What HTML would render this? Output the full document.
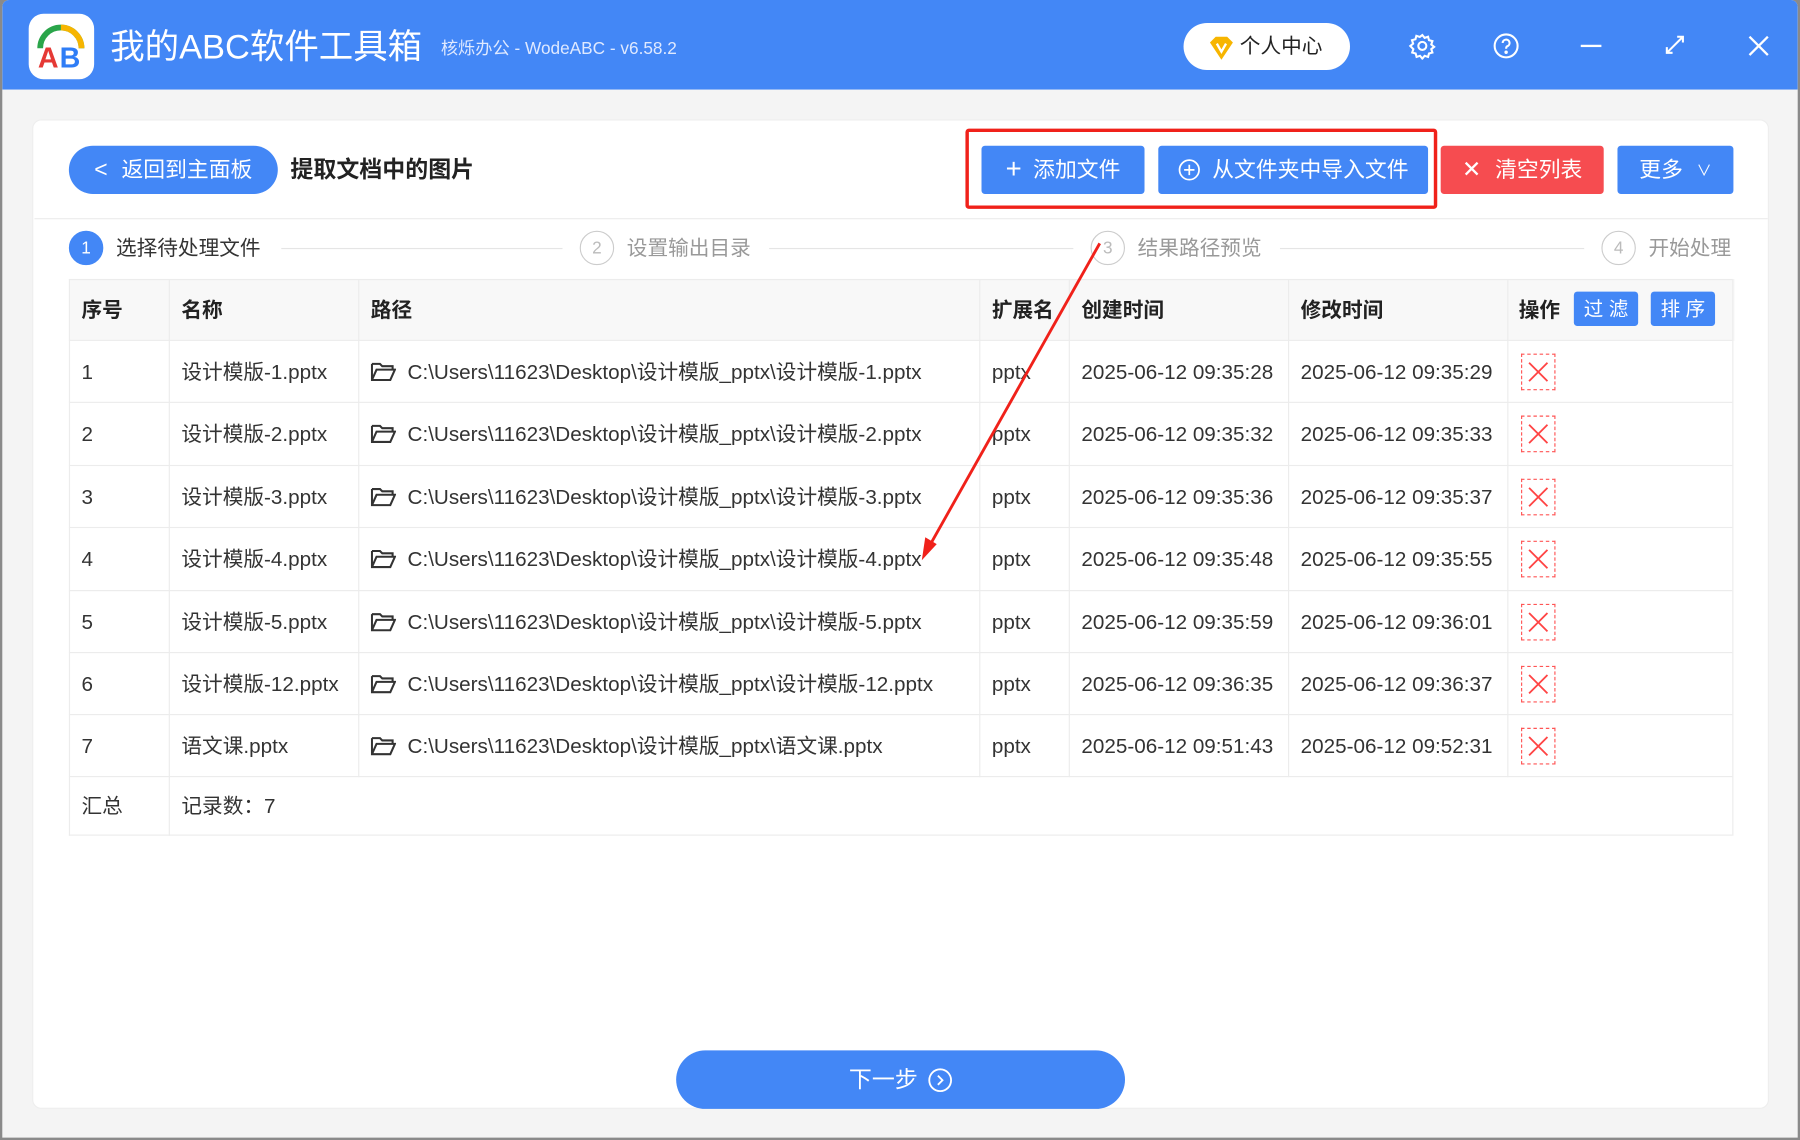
<!DOCTYPE html>
<html><head><meta charset="utf-8">
<style>
*{box-sizing:border-box;margin:0;padding:0}
html,body{width:1800px;height:1140px;overflow:hidden;background:#8a8a8a}
#s{position:absolute;left:0;top:0;width:1568px;height:993px;transform:scale(1.14796);transform-origin:0 0;font-family:"Liberation Sans","Noto Sans CJK SC",sans-serif;color:#333}
.a{position:absolute}
.win{left:2px;top:0;width:1564px;height:991px;background:#f4f4f4;border-radius:6px 6px 0 0;overflow:hidden}
.tb{left:0;top:0;width:1564px;height:78px;background:#4387f6}
.btn{position:absolute;background:#4387f6;color:#fff;font-size:19px;display:flex;align-items:center;justify-content:center;border-radius:3px;line-height:1}
.t{position:absolute;font-size:18px;color:#333;white-space:nowrap;line-height:24px;height:24px}
.h{font-weight:bold;color:#222}
.vl{position:absolute;top:243px;height:485px;width:1px;background:#ececec}
.hl{position:absolute;left:60px;width:1449px;height:1px;background:#ececec}
.circ{position:absolute;width:30px;height:30px;border-radius:50%;border:1.5px solid #ccc;color:#bbb;font-size:15px;display:flex;align-items:center;justify-content:center}
.del{position:absolute;left:1325px;width:30px;height:32px;border:1px dashed #f55;}
.ic{position:absolute;left:0;top:0}
</style></head><body>
<div id="s">
<div class="a win">
 <div class="a tb"></div>
 <div class="a" style="left:23px;top:12px;width:57px;height:57px;background:#fff;border-radius:13px"></div>
 <svg class="a" style="left:23px;top:12px" width="57" height="57" viewBox="0 0 57 57">
  <path d="M10 30 A18 18 0 0 1 46 30" fill="none" stroke="#2aa54a" stroke-width="5"/>
  <path d="M28 12 A18 18 0 0 1 46 30" fill="none" stroke="#f7b500" stroke-width="5"/>
  <text x="8" y="47" font-size="25" font-weight="bold" fill="#e53935" font-family="Liberation Sans">A</text>
  <text x="27" y="47" font-size="25" font-weight="bold" fill="#2f7df6" font-family="Liberation Sans">B</text>
 </svg>
 <div class="t" style="left:94px;top:22px;font-size:30px;line-height:40px;height:40px;color:#fff">我的ABC软件工具箱</div>
 <div class="t" style="left:382px;top:31px;font-size:15px;color:#dfe9ff">核烁办公 - WodeABC - v6.58.2</div>
 <div class="a" style="left:1029px;top:20px;width:145px;height:41px;background:#fff;border-radius:21px"></div>
 <svg class="a" style="left:1050px;top:30px" width="24" height="24" viewBox="0 0 24 24"><path d="M2 7 L7 2 H17 L22 7 L12 22 Z" fill="#f7b500"/><path d="M8 8 L12 15 L16 8" fill="none" stroke="#fff" stroke-width="2"/></svg>
 <div class="t" style="left:1078px;top:28px;font-size:18px;color:#222">个人中心</div>
 <svg class="a" style="left:1225px;top:28px" width="24" height="24" viewBox="0 0 24 24" fill="none" stroke="#fff" stroke-width="1.8"><circle cx="12" cy="12" r="3.5"/><path d="M12 2.5l2 2.5 3-1 .8 3 3 .8-1 3 2.5 2-2.5 2 1 3-3 .8-.8 3-3-1-2 2.5-2-2.5-3 1-.8-3-3-.8 1-3L1.5 12 4 10 3 7l3-.8L6.8 3.2l3 1z"/></svg>
 <svg class="a" style="left:1298px;top:28px" width="24" height="24" viewBox="0 0 24 24" fill="none" stroke="#fff" stroke-width="1.8"><circle cx="12" cy="12" r="10"/><path d="M9 9.5a3 3 0 1 1 4 2.8c-1 .4-1 1.2-1 2.2"/><circle cx="12" cy="17.5" r=".6" fill="#fff"/></svg>
 <div class="a" style="left:1375px;top:39px;width:18px;height:2px;background:#fff"></div>
 <svg class="a" style="left:1447px;top:29px" width="20" height="20" viewBox="0 0 20 20" fill="none" stroke="#fff" stroke-width="1.8"><path d="M3 17 L17 3 M12 3 H17 V8 M3 12 V17 H8"/></svg>
 <svg class="a" style="left:1520px;top:30px" width="20" height="20" viewBox="0 0 20 20" stroke="#fff" stroke-width="2"><path d="M2 2 L18 18 M18 2 L2 18"/></svg>

 <div class="a" style="left:26px;top:104px;width:1513px;height:862px;background:#fff;border-radius:8px;border:1px solid #eee"></div>
 <div class="btn" style="left:58px;top:127px;width:182px;height:42px;border-radius:21px;font-size:19px"><span style="margin-right:12px;font-size:20px">&lt;</span>返回到主面板</div>
 <div class="t h" style="left:251px;top:136px;font-size:20px">提取文档中的图片</div>
 <div class="btn" style="left:853px;top:127px;width:142px;height:42px"><span style="font-size:24px;margin-right:10px;font-weight:200">+</span>添加文件</div>
 <div class="btn" style="left:1007px;top:127px;width:235px;height:42px"><svg width="20" height="20" viewBox="0 0 20 20" style="margin-right:10px" fill="none" stroke="#fff" stroke-width="1.5"><circle cx="10" cy="10" r="8.5"/><path d="M10 5.5v9M5.5 10h9"/></svg>从文件夹中导入文件</div>
 <div class="a" style="left:839px;top:112px;width:411px;height:70px;border:3px solid #f0211a;border-radius:3px"></div>
 <div class="btn" style="left:1253px;top:127px;width:142px;height:42px;background:#f64c50"><span style="font-size:20px;margin-right:12px">✕</span>清空列表</div>
 <div class="btn" style="left:1407px;top:127px;width:101px;height:42px">更多<span style="font-size:13px;margin-left:12px">∨</span></div>
 <div class="a" style="left:28px;top:190px;width:1510px;height:1px;background:#ececec"></div>

 <div class="circ" style="left:58px;top:201px;background:#4387f6;border-color:#4387f6;color:#fff">1</div>
 <div class="t" style="left:99px;top:204px">选择待处理文件</div>
 <div class="a" style="left:243px;top:216px;width:245px;height:1px;background:#e5e5e5"></div>
 <div class="circ" style="left:503px;top:201px">2</div>
 <div class="t" style="left:544px;top:204px;color:#999">设置输出目录</div>
 <div class="a" style="left:668px;top:216px;width:265px;height:1px;background:#e5e5e5"></div>
 <div class="circ" style="left:948px;top:201px">3</div>
 <div class="t" style="left:989px;top:204px;color:#999">结果路径预览</div>
 <div class="a" style="left:1113px;top:216px;width:265px;height:1px;background:#e5e5e5"></div>
 <div class="circ" style="left:1393px;top:201px">4</div>
 <div class="t" style="left:1434px;top:204px;color:#999">开始处理</div>

 <div class="a" style="left:58px;top:243px;width:1451px;height:54px;background:#f8f8f8"></div>
 <div class="hl" style="left:58px;top:243px"></div><div class="hl" style="left:58px;top:296px"></div><div class="hl" style="left:58px;top:350px"></div><div class="hl" style="left:58px;top:405px"></div><div class="hl" style="left:58px;top:459px"></div><div class="hl" style="left:58px;top:514px"></div><div class="hl" style="left:58px;top:568px"></div><div class="hl" style="left:58px;top:622px"></div><div class="hl" style="left:58px;top:676px"></div><div class="hl" style="left:58px;top:727px"></div>
 <div class="vl" style="left:58px"></div><div class="vl" style="left:145px"></div><div class="vl" style="left:310px;height:434px"></div><div class="vl" style="left:851px;height:434px"></div><div class="vl" style="left:929px;height:434px"></div><div class="vl" style="left:1120px;height:434px"></div><div class="vl" style="left:1311px;height:434px"></div><div class="vl" style="left:1507px"></div>

 <div class="t h" style="left:69px;top:258px">序号</div>
 <div class="t h" style="left:156px;top:258px">名称</div>
 <div class="t h" style="left:321px;top:258px">路径</div>
 <div class="t h" style="left:862px;top:258px">扩展名</div>
 <div class="t h" style="left:940px;top:258px">创建时间</div>
 <div class="t h" style="left:1131px;top:258px">修改时间</div>
 <div class="t h" style="left:1321px;top:258px">操作</div>
 <div class="btn" style="left:1369px;top:254px;width:56px;height:30px;font-size:17px">过 滤</div>
 <div class="btn" style="left:1436px;top:254px;width:56px;height:30px;font-size:17px">排 序</div>

 <div id="rows"></div>
 <div class="t" style="left:69px;top:690px">汇总</div>
 <div class="t" style="left:156px;top:690px">记录数：7</div>

 <svg class="a" style="left:0;top:0" width="1564" height="991"><line x1="956" y1="212" x2="808" y2="475" stroke="#f0211a" stroke-width="2.5"/><path d="M801 488 L804 468 L814 474 Z" fill="#f0211a"/></svg>

 <div class="btn" style="left:587px;top:915px;width:391px;height:51px;border-radius:26px;font-size:20px">下一步 <svg width="22" height="22" viewBox="0 0 22 22" style="margin-left:8px" fill="none" stroke="#fff" stroke-width="1.6"><circle cx="11" cy="11" r="9.5"/><path d="M9 7l4 4-4 4"/></svg></div>
</div>
</div>
<script>
var d=[["1","设计模版-1.pptx","C:\\Users\\11623\\Desktop\\设计模版_pptx\\设计模版-1.pptx","2025-06-12 09:35:28","2025-06-12 09:35:29"],
["2","设计模版-2.pptx","C:\\Users\\11623\\Desktop\\设计模版_pptx\\设计模版-2.pptx","2025-06-12 09:35:32","2025-06-12 09:35:33"],
["3","设计模版-3.pptx","C:\\Users\\11623\\Desktop\\设计模版_pptx\\设计模版-3.pptx","2025-06-12 09:35:36","2025-06-12 09:35:37"],
["4","设计模版-4.pptx","C:\\Users\\11623\\Desktop\\设计模版_pptx\\设计模版-4.pptx","2025-06-12 09:35:48","2025-06-12 09:35:55"],
["5","设计模版-5.pptx","C:\\Users\\11623\\Desktop\\设计模版_pptx\\设计模版-5.pptx","2025-06-12 09:35:59","2025-06-12 09:36:01"],
["6","设计模版-12.pptx","C:\\Users\\11623\\Desktop\\设计模版_pptx\\设计模版-12.pptx","2025-06-12 09:36:35","2025-06-12 09:36:37"],
["7","语文课.pptx","C:\\Users\\11623\\Desktop\\设计模版_pptx\\语文课.pptx","2025-06-12 09:51:43","2025-06-12 09:52:31"]];
var h="";
d.forEach(function(r,i){var y=297+i*54.4,ty=y+15;
h+='<div class="t" style="left:69px;top:'+ty+'px">'+r[0]+'</div>';
h+='<div class="t" style="left:156px;top:'+ty+'px">'+r[1]+'</div>';
h+='<svg class="a" style="left:321px;top:'+(y+18)+'px" width="22" height="18" viewBox="0 0 22 18" fill="none" stroke="#333" stroke-width="1.8"><path d="M1 2h7l2 2h9v3M1 2v14h16l4-9H5L1 16"/></svg>';
h+='<div class="t" style="left:353px;top:'+ty+'px">'+r[2]+'</div>';
h+='<div class="t" style="left:862px;top:'+ty+'px">pptx</div>';
h+='<div class="t" style="left:940px;top:'+ty+'px">'+r[3]+'</div>';
h+='<div class="t" style="left:1131px;top:'+ty+'px">'+r[4]+'</div>';
h+='<div class="del" style="left:1323px;top:'+(y+11)+'px"><svg class="ic" width="28" height="30" viewBox="0 0 28 30" stroke="#f44" stroke-width="1.6"><path d="M6 7L22 23M22 7L6 23"/></svg></div>';
});
document.getElementById("rows").innerHTML=h;
</script>
</body></html>
